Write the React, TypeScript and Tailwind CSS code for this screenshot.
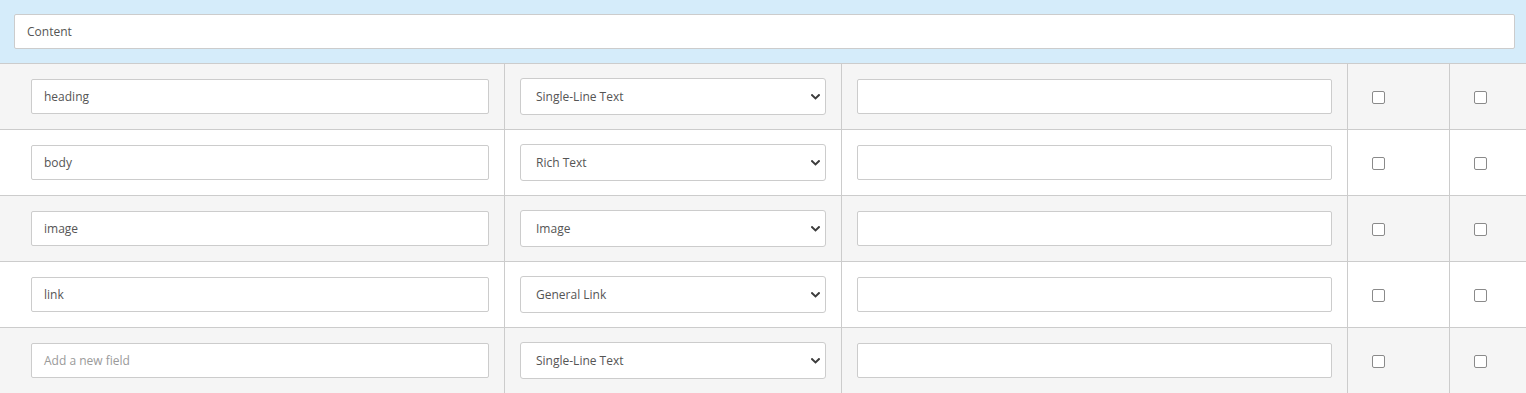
import React from "react";

const rows = [
  { name: "heading", type: "Single-Line Text", gray: true },
  { name: "body", type: "Rich Text", gray: false },
  { name: "image", type: "Image", gray: true },
  { name: "link", type: "General Link", gray: false },
  { name: "", type: "Single-Line Text", gray: true, placeholder: "Add a new field" },
];

function Chevron() {
  return (
    <svg width="9" height="6" viewBox="0 0 9 6" className="pointer-events-none absolute right-[5px] top-1/2 -translate-y-1/2">
      <polyline points="1.1,1.1 4.5,4.4 7.9,1.1" fill="none" stroke="#3c3c3c" strokeWidth="2" strokeLinecap="square" />
    </svg>
  );
}

function Check() {
  return (
    <input
      type="checkbox"
      className="appearance-none w-[13px] h-[13px] mt-[2px] border border-[#8a8a8a] rounded-[2px] bg-white"
    />
  );
}

export default function App() {
  return (
    <div className="w-[1526px] h-[393px] overflow-hidden bg-white text-[12px] text-[#555]" style={{ fontFamily: '"Open Sans", "Noto Sans", sans-serif' }}>
      <div className="bg-[#d5ecfa] border-b border-[#cccccc] pt-[14px] pb-[14px] pl-[14px] pr-[11px]">
        <div className="h-[35px] bg-white border border-[#cccccc] rounded-[2px] flex items-center pl-[12px] text-[#555]">
          Content
        </div>
      </div>
      {rows.map((r, i) => (
        <div
          key={i}
          className={`flex h-[66px] border-b border-[#cccccc] ${r.gray ? "bg-[#f5f5f5]" : "bg-white"}`}
        >
          <div className="w-[505px] shrink-0 border-r border-[#cccccc] flex items-center pl-[31px] pr-[15px]">
            <div className="w-full h-[35px] bg-white border border-[#cccccc] rounded-[2px] flex items-center pl-[12px]">
              {r.name ? (
                <span className="text-[#555]">{r.name}</span>
              ) : (
                <span className="text-[#9a9a9a]">{r.placeholder}</span>
              )}
            </div>
          </div>
          <div className="w-[337px] shrink-0 border-r border-[#cccccc] flex items-center pl-[15px] pr-[15px]">
            <div className="relative w-full h-[37px] bg-white border border-[#cccccc] rounded-[3px] flex items-center pl-[15px]">
              <span className="text-[#555]">{r.type}</span>
              <Chevron />
            </div>
          </div>
          <div className="w-[506px] shrink-0 border-r border-[#cccccc] flex items-center pl-[15px] pr-[15px]">
            <div className="w-full h-[35px] bg-white border border-[#cccccc] rounded-[2px]" />
          </div>
          <div className="w-[102px] shrink-0 border-r border-[#cccccc] flex items-center pl-[24px]">
            <Check />
          </div>
          <div className="flex-1 flex items-center pl-[24px]">
            <Check />
          </div>
        </div>
      ))}
    </div>
  );
}
